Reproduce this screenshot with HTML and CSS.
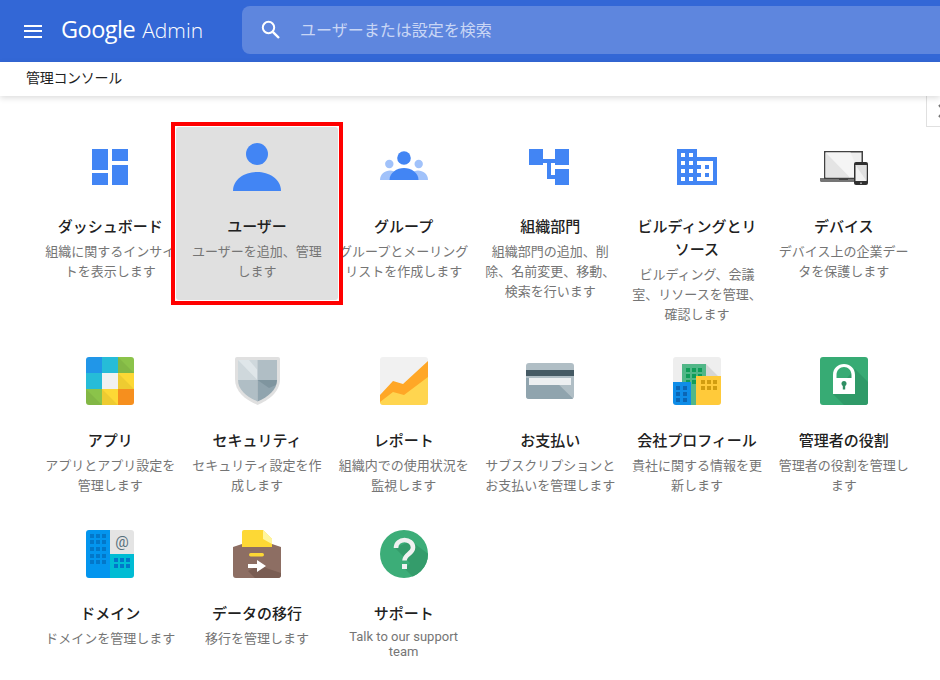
FILE: index.html
```html
<!DOCTYPE html>
<html lang="ja">
<head>
<meta charset="utf-8">
<title>Google Admin</title>
<link rel="stylesheet" href="styles.css">
</head>
<body>
<header class="topbar">
  <button class="menu" aria-label="メニュー"><span></span><span></span><span></span></button>
  <div class="logo"><span class="logo-google">Google</span><span class="logo-admin">Admin</span></div>
  <div class="search">
    <svg class="search-icon" width="24" height="24" viewBox="0 0 24 24"><circle cx="9.5" cy="9.5" r="5.7" fill="none" stroke="#fff" stroke-width="2"/><path d="M13.8 13.8L20 20" stroke="#fff" stroke-width="2.4" fill="none"/></svg>
    <span class="placeholder">ユーザーまたは設定を検索</span>
  </div>
</header>
<nav class="crumb">
  <span>管理コンソール</span>
</nav>
<div class="side-tab"><svg width="14" height="14" viewBox="0 0 14 14"><path d="M12 1l5 6-5 6" fill="none" stroke="#757575" stroke-width="2"/></svg></div>
<main class="grid">

  <section class="card">
    <svg class="icon" viewBox="0 0 48 48"><g fill="#4285f4"><rect x="6" y="6" width="16" height="21"/><rect x="26" y="6" width="16" height="12"/><rect x="6" y="30" width="16" height="12"/><rect x="26" y="22" width="16" height="20"/></g></svg>
    <h2>ダッシュボード</h2>
    <p>組織に関するインサイトを表示します</p>
  </section>

  <section class="card">
    <div class="highlight"></div>
    <div class="card-raised">
      <svg class="icon" viewBox="0 0 48 48"><g fill="#4285f4"><circle cx="24" cy="11" r="11"/><path d="M0 48C0 36 12 29 24 29S48 36 48 48Z"/></g></svg>
      <h2>ユーザー</h2>
      <p>ユーザーを追加、管理します</p>
    </div>
  </section>

  <section class="card">
    <svg class="icon" viewBox="0 0 48 48"><g fill="#a1c2fa"><circle cx="9.300" cy="21" r="4.200"/><circle cx="38.700" cy="21" r="4.200"/><path d="M0 37C0 31 5 27.500 10 27.500S20 31 20 37Z"/><path d="M28 37C28 31 33 27.500 38 27.500S48 31 48 37Z"/></g><g fill="#4285f4"><circle cx="24" cy="15" r="6.800"/><path d="M9.500 37C9.500 29.500 17 25 24 25S38.500 29.500 38.500 37Z"/></g></svg>
    <h2>グループ</h2>
    <p>グループとメーリングリストを作成します</p>
  </section>

  <section class="card">
    <svg class="icon" viewBox="0 0 48 48"><g fill="#4285f4"><rect x="3" y="6" width="14" height="16"/><rect x="29" y="6" width="14" height="16"/><rect x="29" y="26" width="14" height="16"/><rect x="17" y="16" width="12" height="4"/><rect x="21" y="16" width="4" height="20"/><rect x="21" y="32" width="8" height="4"/></g></svg>
    <h2>組織部門</h2>
    <p>組織部門の追加、削除、名前変更、移動、検索を行います</p>
  </section>

  <section class="card">
    <svg class="icon" viewBox="0 0 48 48"><path fill="#4285f4" d="M4 6h20v8h20v28H4z"/><g fill="#fff"><rect x="8" y="10" width="4" height="4"/><rect x="16" y="10" width="4" height="4"/><rect x="8" y="18" width="4" height="4"/><rect x="16" y="18" width="4" height="4"/><rect x="8" y="26" width="4" height="4"/><rect x="16" y="26" width="4" height="4"/><rect x="8" y="34" width="4" height="4"/><rect x="16" y="34" width="4" height="4"/><rect x="24" y="18" width="16" height="20"/></g><g fill="#4285f4"><rect x="24" y="22" width="4" height="4"/><rect x="24" y="30" width="4" height="4"/><rect x="32" y="22" width="4" height="4"/><rect x="32" y="30" width="4" height="4"/></g></svg>
    <h2>ビルディングとリソース</h2>
    <p>ビルディング、会議室、リソースを管理、確認します</p>
  </section>

  <section class="card">
    <svg class="icon" viewBox="0 0 48 48"><path fill="#757575" d="M0 35h38v4H1.500Q0 39 0 37.500Z"/><rect x="19" y="35" width="9" height="2" fill="#424242"/><rect x="4" y="8" width="39" height="28" fill="#424242"/><rect x="5.500" y="9.500" width="36" height="25" fill="#eeeeee"/><path d="M5.500 9.500h25l11 25h-12z" fill="#f5f5f5"/><path d="M5.500 9.500L30 34.500H5.500z" fill="#e4e4e4"/><rect x="34" y="19" width="14" height="23" rx="2" fill="#303030"/><rect x="35.500" y="22" width="11" height="16" fill="#f1f1f1"/><path d="M35.500 22h11v16z" fill="#e0e0e0"/><rect x="40" y="39.500" width="2" height="1.500" fill="#9e9e9e"/></svg>
    <h2>デバイス</h2>
    <p>デバイス上の企業データを保護します</p>
  </section>

  <section class="card">
    <svg class="icon" viewBox="0 0 48 48"><defs><clipPath id="c1"><rect width="48" height="48" rx="3"/></clipPath></defs><g clip-path="url(#c1)"><rect width="16" height="16" fill="#2196e8"/><rect x="16" width="16" height="16" fill="#26bcd8"/><rect x="32" width="16" height="16" fill="#8bc34a"/><rect y="16" width="16" height="16" fill="#26bcd8"/><rect x="16" y="16" width="16" height="16" fill="#f1f1f1"/><rect x="32" y="16" width="16" height="16" fill="#fdd835"/><rect y="32" width="16" height="16" fill="#8bc34a"/><rect x="16" y="32" width="16" height="16" fill="#fdd835"/><rect x="32" y="32" width="16" height="16" fill="#f68f1e"/><path d="M32 0l16 16H32zM0 32l16 16H0zM16 32l16 16H16zM32 16l16 16H32z" fill="#000" opacity=".06"/></g></svg>
    <h2>アプリ</h2>
    <p>アプリとアプリ設定を管理します</p>
  </section>

  <section class="card">
    <svg class="icon" viewBox="0 0 48 48"><path fill="#e0e0e0" d="M4 0h41q2 0 2 2v20c0 13-11 21-22.500 26C13 43 2 35 2 22V2q0-2 2-2z"/><path fill="#cfd8dc" d="M5 3h19.500v20H5z"/><path fill="#dfe6e9" d="M5 3h11l8.500 10v10z"/><path fill="#b0bec5" d="M24.500 3H44v20H24.500zM5 23h19.500v21.500C14 40 5 33 5 23z"/><path fill="#90a4ae" d="M24.500 23H44c0 10-9 17-19.500 21.500z"/><path fill="#7f959f" d="M24.500 23H44l-1 5-7 3z"/></svg>
    <h2>セキュリティ</h2>
    <p>セキュリティ設定を作成します</p>
  </section>

  <section class="card">
    <svg class="icon" viewBox="0 0 48 48"><defs><clipPath id="c2"><rect width="48" height="48" rx="3"/></clipPath></defs><g clip-path="url(#c2)"><rect width="48" height="48" fill="#f1f1f1"/><path fill="#ffa726" d="M0 38L13 24l10 3L48 4v19L24 40 13 36 0 46z"/><path fill="#ffd54f" d="M0 45L13 35l11 3 24-18v28H0z"/></g></svg>
    <h2>レポート</h2>
    <p>組織内での使用状況を監視します</p>
  </section>

  <section class="card">
    <svg class="icon" viewBox="0 0 48 48"><rect y="6" width="48" height="36" rx="3" fill="#b0bec5"/><path d="M0 21h26l21 20.500Q46 42 45 42H3q-3 0-3-3z" fill="#90a4ae"/><rect y="13" width="48" height="6" fill="#455a64"/><rect x="3" y="21" width="42" height="7" fill="#eceff1"/></svg>
    <h2>お支払い</h2>
    <p>サブスクリプションとお支払いを管理します</p>
  </section>

  <section class="card">
    <svg class="icon" viewBox="0 0 48 48"><defs><clipPath id="c3"><rect width="48" height="48" rx="3"/></clipPath></defs><g clip-path="url(#c3)"><rect width="48" height="48" fill="#eeeeee"/><path d="M33 7l15 15v-3H33z" fill="#d6d6d6"/><rect x="9" y="7" width="24" height="41" fill="#52b788"/><g fill="#0f9d58"><rect x="13" y="11" width="4" height="4"/><rect x="19" y="11" width="4" height="4"/><rect x="25" y="11" width="4" height="4"/><rect x="13" y="17" width="4" height="4"/><rect x="19" y="17" width="4" height="4"/><rect x="25" y="17" width="4" height="4"/><rect x="13" y="23" width="4" height="4"/><rect x="19" y="23" width="4" height="4"/></g><rect x="23" y="19" width="25" height="29" fill="#ffca3a"/><g fill="#d19d10"><rect x="28" y="23" width="4" height="4"/><rect x="34" y="23" width="4" height="4"/><rect x="40" y="23" width="4" height="4"/><rect x="28" y="29" width="4" height="4"/><rect x="34" y="29" width="4" height="4"/><rect x="40" y="29" width="4" height="4"/></g><rect y="25" width="18" height="23" fill="#0f8de8"/><g fill="#0b66b5"><rect x="3" y="29" width="4" height="4"/><rect x="10" y="29" width="4" height="4"/><rect x="3" y="35" width="4" height="4"/><rect x="10" y="35" width="4" height="4"/><rect x="3" y="41" width="4" height="4"/><rect x="10" y="41" width="4" height="4"/></g></g></svg>
    <h2>会社プロフィール</h2>
    <p>貴社に関する情報を更新します</p>
  </section>

  <section class="card">
    <svg class="icon" viewBox="0 0 48 48"><rect width="48" height="48" rx="3" fill="#37ab74"/><path d="M13 37l11 11h21q3 0 3-3V25L35 12z" fill="#2f9a68"/><path fill="#fff" fill-rule="evenodd" d="M13 37V18C13 11 18 7 24 7s11 4 11 11v19zM16.500 21h15v-3c0-5-3.500-8-7.500-8s-7.500 3-7.500 8z"/><circle cx="24" cy="26.500" r="2.500" fill="#2f8f63"/><rect x="22.800" y="27" width="2.400" height="5.500" fill="#2f8f63"/></svg>
    <h2>管理者の役割</h2>
    <p>管理者の役割を管理します</p>
  </section>

  <section class="card">
    <svg class="icon" viewBox="0 0 48 48"><defs><clipPath id="c4"><rect width="48" height="48" rx="3"/></clipPath></defs><g clip-path="url(#c4)"><rect width="24" height="48" fill="#0395ee"/><rect x="24" width="24" height="24" fill="#e4e4e4"/><rect x="24" y="24" width="24" height="24" fill="#00bcd4"/><g fill="#0277c9"><rect x="4" y="4" width="4" height="4"/><rect x="10" y="4" width="4" height="4"/><rect x="16" y="4" width="4" height="4"/><rect x="4" y="10" width="4" height="4"/><rect x="10" y="10" width="4" height="4"/><rect x="16" y="10" width="4" height="4"/><rect x="4" y="17" width="4" height="4"/><rect x="10" y="17" width="4" height="4"/><rect x="16" y="17" width="4" height="4"/><rect x="4" y="24" width="4" height="4"/><rect x="10" y="24" width="4" height="4"/><rect x="16" y="24" width="4" height="4"/><rect x="4" y="30" width="4" height="4"/><rect x="10" y="30" width="4" height="4"/><rect x="16" y="30" width="4" height="4"/><rect x="28" y="28" width="4" height="4"/><rect x="34" y="28" width="4" height="4"/><rect x="40" y="28" width="4" height="4"/><rect x="28" y="34" width="4" height="4"/><rect x="34" y="34" width="4" height="4"/><rect x="40" y="34" width="4" height="4"/></g><text class="at" x="36" y="17" text-anchor="middle">@</text></g></svg>
    <h2>ドメイン</h2>
    <p>ドメインを管理します</p>
  </section>

  <section class="card">
    <svg class="icon" viewBox="0 0 48 48"><path d="M9 2q0-2 2-2h19l9 9v10H9z" fill="#fdd835"/><path d="M30 0l9 9v5l-9-5z" fill="#fff59d"/><path d="M0 17l9-3v3h30v-3l9 3v28q0 3-3 3H3q-3 0-3-3z" fill="#8d6e63"/><path d="M33 38l-4-4-14 7 7 7h23q3 0 3-3v-2z" fill="#7a5d53"/><rect x="16" y="23" width="15" height="3.400" rx="1.700" fill="#fdd835"/><path d="M15 34h9v-4l9 6-9 6v-4h-9z" fill="#fff"/></svg>
    <h2>データの移行</h2>
    <p>移行を管理します</p>
  </section>

  <section class="card">
    <svg class="icon" viewBox="0 0 48 48"><defs><clipPath id="c5"><circle cx="24" cy="24" r="24"/></clipPath></defs><g clip-path="url(#c5)"><rect width="48" height="48" fill="#3cad78"/><path d="M17 17l-2 1 15 15-5 6 12 12 14-12V26L31 11z" fill="#349c6b"/></g><path d="M16 18c0-5 4-8 8.500-8S33 13 33 17.500c0 6-8.500 7-8.500 13" fill="none" stroke="#f1f1f1" stroke-width="4.600"/><rect x="22" y="34" width="5" height="5" fill="#f1f1f1"/></svg>
    <h2>サポート</h2>
    <p class="latin">Talk to our support team</p>
  </section>

</main>
</body>
</html>
```

FILE: styles.css
```css
* { box-sizing: border-box; }

html, body {
  margin: 0;
  height: 680px;
  overflow: hidden;
  background: #fff;
  font-family: Roboto, "Noto Sans CJK JP", sans-serif;
}

.topbar {
  display: flex;
  align-items: center;
  height: 62px;
  padding-left: 24px;
  background: #3367d6;
}

.menu {
  display: flex;
  flex-direction: column;
  gap: 3.500px;
  width: 18px;
  padding: 0;
  border: 0;
  background: none;
  flex: none;
}

.menu span {
  display: block;
  height: 2px;
  background: #fff;
}

.logo {
  display: flex;
  align-items: baseline;
  gap: 7px;
  width: 200px;
  margin-bottom: 4px;
  padding-left: 19px;
  color: #fff;
  font-family: "Open Sans", sans-serif;
  flex: none;
}

.logo-google {
  font-size: 23.500px;
  letter-spacing: -0.500px;
}

.logo-admin {
  font-size: 21px;
  font-weight: 300;
}

.search {
  display: flex;
  align-items: center;
  flex: 1;
  height: 48px;
  margin-bottom: 2px;
  padding-left: 17px;
  gap: 17px;
  border-radius: 8px 0 0 8px;
  background: #5e86de;
}

.placeholder {
  margin-bottom: 2px;
  color: #c9d6f5;
  font-size: 16px;
}

.crumb {
  display: flex;
  align-items: center;
  height: 34px;
  padding-left: 26px;
  padding-bottom: 4px;
  color: #212121;
  font-size: 14px;
  letter-spacing: -0.300px;
  box-shadow: 0 2px 6px rgba(0, 0, 0, .14);
  position: relative;
  z-index: 3;
}

.side-tab {
  position: absolute;
  top: 96px;
  left: 926px;
  width: 14px;
  height: 31px;
  padding-top: 8px;
  border: 1px solid #e0e0e0;
  border-right: 0;
  border-top: 0;
}

.side-tab svg {
  display: block;
}

.grid {
  display: grid;
  grid-template-columns: repeat(6, 1fr);
  grid-template-rows: 214px 173px auto;
  padding: 47px 23px 0 37px;
}

.card {
  position: relative;
  text-align: center;
}

.card-raised {
  position: relative;
  z-index: 2;
}

.highlight {
  position: absolute;
  z-index: 1;
  top: -21px;
  left: -13px;
  right: -13px;
  height: 183px;
  border: 4px solid #f00;
  background: #fff;
}

.highlight::before {
  content: "";
  position: absolute;
  inset: 1px;
  border-radius: 3px;
  background: #e0e0e0;
}

.icon {
  display: block;
  width: 48px;
  height: 48px;
  margin: 0 auto 25px;
}

.card h2 {
  width: 132px;
  margin: 0 auto 3px;
  color: #212121;
  font-size: 15px;
  font-weight: 500;
  line-height: 23px;
}

.card p {
  width: 132px;
  margin: 0 auto;
  color: #757575;
  font-size: 13px;
  line-height: 20px;
}

.card p.latin {
  line-height: 15px;
}

.at {
  fill: #546e7a;
  font-family: Roboto, sans-serif;
  font-size: 15px;
}
```
